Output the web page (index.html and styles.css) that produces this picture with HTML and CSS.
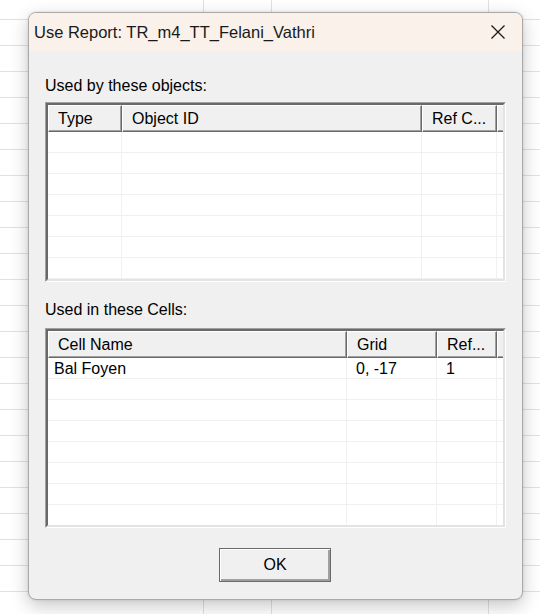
FILE: index.html
```html
<!doctype html>
<html lang="en">
  <head>
    <meta charset="UTF-8" />
    <title>Use Report</title>
    <link rel="stylesheet" href="styles.css">
  </head>
  <body>
    <!-- Use report dialog -->
    <div class="dialog">
      <div class="titlebar">
        <span class="title">Use Report: TR_m4_TT_Felani_Vathri</span>
        <svg class="close" width="16" height="16" viewBox="0 0 16 16">
          <path d="M1.5 1.5 L14.5 14.5 M14.5 1.5 L1.5 14.5" stroke="#1b1b1b" stroke-width="1.3" fill="none" />
        </svg>
      </div>

      <div class="content">
        <div class="label label-objects">Used by these objects:</div>
        <div class="list list-objects">
          <div class="list-inner">
            <div class="row head">
              <div class="hcell">Type</div>
              <div class="hcell">Object ID</div>
              <div class="hcell">Ref C...</div>
              <div class="hcell"></div>
            </div>
            <div class="row"><div class="cell"></div><div class="cell"></div><div class="cell"></div><div class="cell"></div></div>
            <div class="row"><div class="cell"></div><div class="cell"></div><div class="cell"></div><div class="cell"></div></div>
            <div class="row"><div class="cell"></div><div class="cell"></div><div class="cell"></div><div class="cell"></div></div>
            <div class="row"><div class="cell"></div><div class="cell"></div><div class="cell"></div><div class="cell"></div></div>
            <div class="row"><div class="cell"></div><div class="cell"></div><div class="cell"></div><div class="cell"></div></div>
            <div class="row"><div class="cell"></div><div class="cell"></div><div class="cell"></div><div class="cell"></div></div>
            <div class="row"><div class="cell"></div><div class="cell"></div><div class="cell"></div><div class="cell"></div></div>
            <div class="row"><div class="cell"></div><div class="cell"></div><div class="cell"></div><div class="cell"></div></div>
          </div>
        </div>

        <div class="label label-cells">Used in these Cells:</div>
        <div class="list list-cells">
          <div class="list-inner">
            <div class="row head">
              <div class="hcell">Cell Name</div>
              <div class="hcell">Grid</div>
              <div class="hcell">Ref...</div>
              <div class="hcell"></div>
            </div>
            <div class="row">
              <div class="cell first">Bal Foyen</div>
              <div class="cell">0, -17</div>
              <div class="cell">1</div>
              <div class="cell"></div>
            </div>
            <div class="row"><div class="cell"></div><div class="cell"></div><div class="cell"></div><div class="cell"></div></div>
            <div class="row"><div class="cell"></div><div class="cell"></div><div class="cell"></div><div class="cell"></div></div>
            <div class="row"><div class="cell"></div><div class="cell"></div><div class="cell"></div><div class="cell"></div></div>
            <div class="row"><div class="cell"></div><div class="cell"></div><div class="cell"></div><div class="cell"></div></div>
            <div class="row"><div class="cell"></div><div class="cell"></div><div class="cell"></div><div class="cell"></div></div>
            <div class="row"><div class="cell"></div><div class="cell"></div><div class="cell"></div><div class="cell"></div></div>
            <div class="row"><div class="cell"></div><div class="cell"></div><div class="cell"></div><div class="cell"></div></div>
            <div class="row"><div class="cell"></div><div class="cell"></div><div class="cell"></div><div class="cell"></div></div>
          </div>
        </div>

        <div class="actions">
          <button class="btn">OK</button>
        </div>
      </div>
    </div>
  </body>
</html>
```

FILE: styles.css
```css
/* Spreadsheet behind the dialog */
html, body {
  margin: 0;
  height: 100%;
}

body {
  background-color: #ffffff;
  background-image:
    linear-gradient(to right, transparent 203px, #e1e1e1 203px, #e1e1e1 204px, transparent 204px),
    linear-gradient(to right, transparent 271px, #e1e1e1 271px, #e1e1e1 272px, transparent 272px),
    linear-gradient(to right, transparent 488px, #e1e1e1 488px, #e1e1e1 489px, transparent 489px),
    repeating-linear-gradient(to bottom, transparent 0, transparent 19px, #e1e1e1 19px, #e1e1e1 20px, transparent 20px, transparent 26px);
  padding: 12px 0 0 28px;
  box-sizing: border-box;
  font-family: "Liberation Sans", Arial, sans-serif;
  color: #000;
}

/* Dialog frame */
.dialog {
  width: 495px;
  height: 588px;
  box-sizing: border-box;
  border: 1px solid #a9a9a9;
  border-radius: 8px;
  overflow: hidden;
  display: flex;
  flex-direction: column;
  background: #f0f0f0;
  box-shadow: 0 6px 18px rgba(0, 0, 0, 0.22), 0 0 3px rgba(0, 0, 0, 0.12);
}

.titlebar {
  height: 38px;
  flex: none;
  display: flex;
  align-items: center;
  justify-content: space-between;
  padding: 0 16px 0 5px;
  background: #f9f1ea;
}

.title {
  font-family: "Liberation Sans", Arial, sans-serif;
  font-size: 16.5px;
  color: #1a1a1a;
}

.close {
  display: block;
}

.content {
  flex: 1;
  padding: 25px 15px 0 16px;
  display: flex;
  flex-direction: column;
}

.label {
  font-size: 16px;
  line-height: 19px;
  color: #000;
}

.label-objects {
  margin-bottom: 7px;
}

.label-cells {
  margin-top: 18px;
  margin-bottom: 9px;
}

/* Sunken list views */
.list {
  width: 461px;
  box-sizing: border-box;
  border: 1px solid;
  border-color: #a0a0a0 #ffffff #ffffff #a0a0a0;
  background: #ffffff;
}

.list-objects {
  height: 180px;
}

.list-cells {
  height: 200px;
}

.list-inner {
  height: 100%;
  box-sizing: border-box;
  border: 2px solid;
  border-color: #696969 #e3e3e3 #e3e3e3 #696969;
  overflow: hidden;
}

.row {
  display: grid;
  height: 21px;
  box-sizing: border-box;
  border-bottom: 1px solid #f0f0f0;
}

.list-objects .row {
  grid-template-columns: 74px 300px 75px 1fr;
}

.list-cells .row {
  grid-template-columns: 299px 90px 60px 1fr;
}

.row.head {
  height: 27px;
  border-bottom: none;
  background: #f0f0f0;
}

.hcell {
  box-sizing: border-box;
  border-top: 1px solid #ffffff;
  border-left: 1px solid #ffffff;
  border-right: 1px solid #696969;
  border-bottom: 1px solid #696969;
  box-shadow: inset -1px -1px 0 #a0a0a0;
  padding: 3px 0 0 9px;
  font-size: 16px;
  line-height: 19px;
  white-space: nowrap;
  overflow: hidden;
}

.hcell:last-child {
  border-right: none;
  box-shadow: inset 0 -1px 0 #a0a0a0;
}

.cell {
  box-sizing: border-box;
  border-right: 1px solid #f0f0f0;
  padding: 1px 0 0 9px;
  font-size: 16px;
  line-height: 19px;
  white-space: nowrap;
}

.cell.first {
  padding-left: 6px;
}

.cell:last-child {
  border-right: none;
}

/* Button row */
.actions {
  display: flex;
  justify-content: center;
  margin-top: 20px;
  padding-right: 2px;
}

.btn {
  width: 112px;
  height: 34px;
  box-sizing: border-box;
  border: 1px solid #696969;
  border-radius: 0;
  background: #f0f0f0;
  box-shadow: inset 1px 1px 0 #ffffff, inset -2px -2px 0 #a0a0a0;
  font-family: "Liberation Sans", Arial, sans-serif;
  font-size: 16px;
  color: #000;
  padding: 0;
}
```
